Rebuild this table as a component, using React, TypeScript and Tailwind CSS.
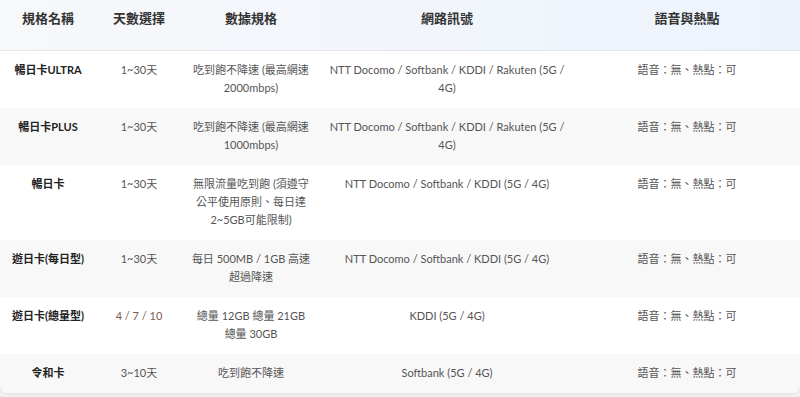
const rows = [
  {
    name: '暢日卡ULTRA',
    days: '1~30天',
    data: '吃到飽不降速 (最高網速 2000mbps)',
    network: 'NTT Docomo / Softbank / KDDI / Rakuten (5G / 4G)',
  },
  {
    name: '暢日卡PLUS',
    days: '1~30天',
    data: '吃到飽不降速 (最高網速 1000mbps)',
    network: 'NTT Docomo / Softbank / KDDI / Rakuten (5G / 4G)',
  },
  {
    name: '暢日卡',
    days: '1~30天',
    data: '無限流量吃到飽 (須遵守公平使用原則、每日達 2~5GB可能限制)',
    network: 'NTT Docomo / Softbank / KDDI (5G / 4G)',
  },
  {
    name: '遊日卡(每日型)',
    days: '1~30天',
    data: '每日 500MB / 1GB 高速超過降速',
    network: 'NTT Docomo / Softbank / KDDI (5G / 4G)',
  },
  {
    name: '遊日卡(總量型)',
    days: '4 / 7 / 10',
    data: '總量 12GB 總量 21GB 總量 30GB',
    network: 'KDDI (5G / 4G)',
    highlight: true,
  },
  {
    name: '令和卡',
    days: '3~10天',
    data: '吃到飽不降速',
    network: 'Softbank (5G / 4G)',
  },
];

const font = { fontFamily: 'Lato, "Noto Sans CJK TC", sans-serif' };

export default function App() {
  return (
    <div className="min-h-screen bg-[#f1f1f1]" style={font}>
      <div className="bg-white rounded-b-lg shadow-[0_1px_3px_rgba(0,0,0,0.08)] overflow-hidden">
        <table className="w-full table-fixed border-collapse text-center">
          <colgroup>
            <col className="w-[96px]" />
            <col className="w-[86px]" />
            <col className="w-[138px]" />
            <col className="w-[254px]" />
            <col className="w-[226px]" />
          </colgroup>
          <thead>
            <tr className="bg-gradient-to-r from-[#f7f8fa] to-[#edf3fd] border-b border-[#e3e6ea]">
              {['規格名稱', '天數選擇', '數據規格', '網路訊號', '語音與熱點'].map((h) => (
                <th
                  key={h}
                  className="h-[50px] px-2 pt-[9px] align-top text-[13px] font-bold text-[#333] leading-[18px]"
                >
                  {h}
                </th>
              ))}
            </tr>
          </thead>
          <tbody className="text-[11px] leading-[18px] text-[#555]">
            {rows.map((r, i) => (
              <tr key={r.name} className={i % 2 === 1 ? 'bg-[#f8f8f8]' : 'bg-white'}>
                <td className="px-2 pt-[10px] pb-[11px] align-top font-bold text-[#222]">{r.name}</td>
                <td className={`px-2 pt-[10px] pb-[11px] align-top ${r.highlight ? 'text-[#7d5a50]' : ''}`}>
                  {r.days}
                </td>
                <td className="px-2 pt-[10px] pb-[11px] align-top">{r.data}</td>
                <td className="px-2 pt-[10px] pb-[11px] align-top">{r.network}</td>
                <td className="px-2 pt-[10px] pb-[11px] align-top">語音：無、熱點：可</td>
              </tr>
            ))}
          </tbody>
        </table>
      </div>
    </div>
  );
}
